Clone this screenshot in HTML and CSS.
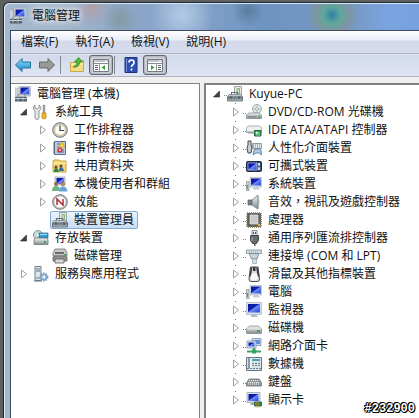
FILE: index.html
```html
<!DOCTYPE html>
<html lang="zh-Hant">
<head>
  <meta charset="UTF-8" />
  <meta name="viewport" content="width=device-width, initial-scale=1.0" />
  <title>電腦管理</title>
  <link rel="stylesheet" href="styles.css">
</head>
<body>
  <!-- Icon sprites, all on a 16x16 grid -->
  <svg class="sprites" aria-hidden="true">
    <defs>
      <linearGradient id="screen" x1="0" y1="0" x2="1" y2="1">
        <stop offset="0" stop-color="#0a1490" /><stop offset=".45" stop-color="#0f22b8" /><stop offset=".5" stop-color="#6f8cf4" /><stop offset="1" stop-color="#2443d8" />
      </linearGradient>
      <linearGradient id="metal" x1="0" y1="0" x2="0" y2="1">
        <stop offset="0" stop-color="#f4f6f6" /><stop offset="1" stop-color="#848b90" />
      </linearGradient>
      <linearGradient id="blue" x1="0" y1="0" x2="0" y2="1">
        <stop offset="0" stop-color="#8fe0fb" /><stop offset="1" stop-color="#1586d0" />
      </linearGradient>
    </defs>
    <symbol id="closed" viewBox="0 0 8 10"><path d="M1.500 1v8l5-4z" fill="#fff" stroke="#a0a0a0" /></symbol>
    <symbol id="open" viewBox="0 0 8 10"><path d="M6.500 2v6h-6z" fill="#404040" stroke="#222" stroke-width=".6" /></symbol>
    <symbol id="manage" viewBox="0 0 16 16">
      <path d="M4 0h12v10H4z" fill="#d8dce4" stroke="#8b93a2" stroke-width=".6" />
      <path d="M5.500 1.500h9v7h-9z" fill="url(#screen)" />
      <path d="M0 2h3v9H0z" fill="#d5d9de" stroke="#99a" stroke-width=".5" />
      <path d="M3 9l2-1h4l1 2v1H2z" fill="#ccd2d8" stroke="#667" stroke-width=".6" />
      <path d="M0 11h12v4.500H0z" fill="#56636f" />
      <path d="M0 12.500h12M3 11.500v3M8 11.500v3" stroke="#c5ced6" />
    </symbol>
    <symbol id="tools" viewBox="0 0 16 16">
      <path d="M2 1v3l2 1 2-1V1c3 2 2 5 0 6v7c-1 2-3 2-4 0V7C0 6 0 2 2 1z" fill="#e5e8e8" stroke="#777e80" stroke-width=".8" />
      <path d="M10 1h2v8h-2z" fill="#aaa" stroke="#777" stroke-width=".4" />
      <path d="M9 9h4v5q-2 2-4 0z" fill="#f5b92c" stroke="#b77b10" stroke-width=".7" />
    </symbol>
    <symbol id="clock" viewBox="0 0 16 16">
      <circle cx="8" cy="8" r="7.300" fill="#c5c8cb" stroke="#73777a" stroke-width="1" />
      <circle cx="8" cy="8" r="5.300" fill="#fffdf0" stroke="#d8c890" />
      <path d="M8 3.500V8.500h4" fill="none" stroke="#333f66" stroke-width="1.200" />
    </symbol>
    <symbol id="event" viewBox="0 0 16 16">
      <path d="M2.500 1.500h11v13h-11z" fill="#bccbe2" stroke="#596d91" />
      <path d="M1 3h2M1 5h2M1 7h2M1 9h2M1 11h2M1 13h2" stroke="#666" />
      <path d="M5 4h3M5 7h2M5 10h7M5 12h7" stroke="#4e6da7" />
      <path d="M10 2l3 5H7z" fill="#ffd430" stroke="#c78d00" stroke-width=".5" />
      <circle cx="8" cy="10" r="2.500" fill="#d8342c" />
      <path d="M7 9l2 2M9 9l-2 2" stroke="#fff" stroke-width=".7" />
    </symbol>
    <symbol id="share" viewBox="0 0 16 16">
      <path d="M1 3l1-1h5l1 1h6v11H1z" fill="#f3d773" stroke="#c9a13a" />
      <path d="M1 5h13" stroke="#fff1b3" />
      <circle cx="4" cy="9" r="1.500" fill="#704628" /><circle cx="9" cy="8" r="1.500" fill="#704628" />
      <path d="M2 14q0-4 2-4t3 4z" fill="#2c8052" /><path d="M7 13q0-4 2-4t3 4z" fill="#356ca7" />
    </symbol>
    <symbol id="users" viewBox="0 0 16 16">
      <path d="M3 1h10v8H3z" fill="#d9dee9" stroke="#7e899d" stroke-width=".6" />
      <path d="M4.500 2h7.500v6H4.500z" fill="url(#screen)" />
      <circle cx="4" cy="8" r="2" fill="#a06a42" /><path d="M0 15q0-5 4-5t4 5z" fill="#6fb583" />
      <circle cx="11" cy="8" r="2.200" fill="#bd8355" /><path d="M7 15.500q0-5 4-5t4.500 5z" fill="#6aa3dc" />
    </symbol>
    <symbol id="perf" viewBox="0 0 16 16">
      <circle cx="8" cy="8" r="7.300" fill="#bfc1c3" stroke="#777" />
      <circle cx="8" cy="8" r="5.500" fill="#fff" />
      <path d="M5 11V5l6 6V5" fill="none" stroke="#b02028" stroke-width="1.400" />
    </symbol>
    <symbol id="device" viewBox="0 0 16 16">
      <path d="M7.500 .5h7v9h-7z" fill="#e6eae4" stroke="#8a908b" stroke-width=".8" />
      <path d="M10 2.500h2.500v5H10z" fill="#c5dfc3" stroke="#75a177" stroke-width=".8" />
      <path d="M4.500 9V6.500h6V9" fill="none" stroke="#676f75" stroke-width="1.200" />
      <path d="M2 8.500h12l1.500 2.500H.5z" fill="#c4cbd0" stroke="#737c82" stroke-width=".7" />
      <path d="M.5 11h15v4H.5z" fill="#7f8b93" stroke="#59646b" stroke-width=".8" />
      <path d="M4 10v3M12 10v3" stroke="#475057" /><path d="M1 14h14" stroke="#abb5bb" />
    </symbol>
    <symbol id="storage" viewBox="0 0 16 16">
      <circle cx="5" cy="5" r="4.500" fill="#c9dbd6" stroke="#7c9b99" /><circle cx="5" cy="5" r="1.300" fill="#fff" />
      <path d="M6 3h9v5H6z" fill="#2f9bd0" stroke="#336f91" stroke-width=".7" /><path d="M7 4h7v1H7z" fill="#a7e3f5" />
      <path d="M1 10l1-2h12l1 2v4.500H1z" fill="url(#metal)" stroke="#6e777a" stroke-width=".8" />
      <path d="M11 11h2v2h-2z" fill="#46a952" />
    </symbol>
    <symbol id="diskmgr" viewBox="0 0 16 16">
      <path d="M1 5l2-4h10l2 4v3H1z" fill="#c7c9c6" stroke="#70736f" stroke-width=".8" /><path d="M3 5h9" stroke="#4d504c" stroke-width="1.500" />
      <path d="M1 9l2-1h10l2 1v4H1z" fill="#91948f" stroke="#60635e" stroke-width=".8" />
      <path d="M3 11h9v4H3z" fill="#dadbd7" stroke="#555" stroke-width=".8" /><path d="M12 6h2v2h-2z" fill="#4ca65d" />
    </symbol>
    <symbol id="services" viewBox="0 0 16 16">
      <path d="M2 .5h6v14H2z" fill="#dfe7eb" stroke="#6d7f8c" /><path d="M3 3h4M3 5h4M3 12h4" stroke="#66798a" />
      <path d="M1 15h8" stroke="#66798a" />
      <circle cx="11" cy="11" r="3.500" fill="#9bb9d4" stroke="#7299bd" stroke-width="1.800" stroke-dasharray="1.500 1" /><circle cx="11" cy="11" r="1.300" fill="#fff" />
    </symbol>
    <symbol id="dvd" viewBox="0 0 16 16">
      <circle cx="11" cy="5" r="4.500" fill="#e4e9e9" stroke="#8d9999" stroke-width=".8" /><path d="M11 1v8M7 5h8" stroke="#a9c6b5" /><circle cx="11" cy="5" r="1.400" fill="#fff" stroke="#777" stroke-width=".5" />
      <path d="M.5 11l2.500-2h10l2.500 2v3.500H.5z" fill="url(#metal)" stroke="#858d90" stroke-width=".8" /><path d="M2 12.500h8" stroke="#888" /><path d="M12 11.500h2v2h-2z" fill="#4db955" />
    </symbol>
    <symbol id="ide" viewBox="0 0 16 16">
      <path d="M.5 6.500q0-2.500 3-2.500h9q3 0 3 2.500v4H.5z" fill="#eef0f0" stroke="#969fa1" stroke-width=".8" /><path d="M1 9.500h14v2H2z" fill="#9aa1a4" />
      <path d="M8.500 8.500h6.500v5.500H8.500z" fill="#3e9a54" stroke="#22673a" /><path d="M10 10h1.500v1.500H10zM13 10v2M10 13h4" fill="#cfe" stroke="#cfe" stroke-width=".6" />
    </symbol>
    <symbol id="hid" viewBox="0 0 16 16">
      <path d="M2 5V1h3v4l1 3-1 5H2L1 8z" fill="#c9d0d5" stroke="#3f4a53" stroke-width="1" />
      <path d="M6.500 3.500h9v5h-9z" fill="#e2e7e9" stroke="#7b878d" stroke-width=".8" /><path d="M7 5h8M7 7h8" stroke="#77848d" stroke-dasharray="1 1" />
      <path d="M7 15l1-5q1-2 2-1h2q2-1 3 1l.5 5-2.500-2h-3z" fill="#aecbe3" stroke="#4d7499" stroke-width=".8" />
    </symbol>
    <symbol id="portable" viewBox="0 0 16 16">
      <rect x=".5" y="3.500" width="15" height="10" rx="1" fill="#33496d" stroke="#1e2d4c" />
      <path d="M2 5h9v7H2z" fill="url(#screen)" /><path d="M2 5h9v7H2z" fill="none" stroke="#c2cde0" stroke-width=".6" /><path d="M12 5h2v7h-2z" fill="#d6dfe9" /><circle cx="13" cy="8.500" r="1" fill="#345" />
    </symbol>
    <symbol id="computer" viewBox="0 0 16 16">
      <path d="M.5 5.500h2.500v9H.5z" fill="#cdd8d5" stroke="#7b8b88" stroke-width=".7" /><path d="M1 9h1v4H1z" fill="#56a26a" />
      <path d="M4 1.500h12v9.500H4z" fill="#dbe0ea" stroke="#a4adbc" stroke-width=".6" /><path d="M5 2.500h10v7H5z" fill="url(#screen)" />
      <path d="M8.500 11h3.500l2 2.500H6.500z" fill="#c3cad2" />
    </symbol>
    <symbol id="sound" viewBox="0 0 16 16">
      <path d="M2 6h4v5H2z" fill="#777f86" stroke="#555e65" stroke-width=".7" /><path d="M6 6l6-5v14l-6-4z" fill="url(#metal)" stroke="#687279" stroke-width=".8" /><path d="M12 2q2 6 0 12" fill="none" stroke="#a4adb2" />
    </symbol>
    <symbol id="cpu" viewBox="0 0 16 16">
      <path d="M1 1h14v14H1z" fill="#686458" stroke="#9c9474" stroke-width="2" stroke-dasharray="1 1" /><path d="M1.500 1.500h13v13h-13z" fill="#5c5b57" />
      <path d="M4 3h8v9H4z" fill="#c8c9ca" stroke="#e7e8e8" stroke-width=".7" /><path d="M12 12h2v2h-2z" fill="#e5bd39" />
    </symbol>
    <symbol id="usb" viewBox="0 0 16 16">
      <path d="M6 .5h5v5H6z" fill="#dde0e1" stroke="#777e82" stroke-width=".8" /><path d="M7 2h1v2H7zM9 2h1v2H9z" fill="#555" />
      <path d="M4.500 5.500h8v5l-2 3h-4l-2-3z" fill="#656b71" stroke="#42474c" /><path d="M6 7v4" stroke="#abb2b6" /><path d="M8 13h1.500v3H8z" fill="#555" />
    </symbol>
    <symbol id="port" viewBox="0 0 16 16">
      <path d="M.5 2h15v3.500H.5z" fill="#d8e0e4" stroke="#7e8c95" stroke-width=".8" /><path d="M3 4h10" stroke="#8b9aa4" stroke-dasharray="1 1" />
      <path d="M3 5.500h10l-2 5.500H5.500z" fill="#c4d2da" stroke="#748793" stroke-width=".8" /><path d="M6.500 11h4v4.500h-4z" fill="#d6dfe4" stroke="#8797a0" stroke-width=".6" />
    </symbol>
    <symbol id="mouse" viewBox="0 0 16 16">
      <path d="M4.500 1h7.500l1.500 12q0 2.500-2 2.500H5q-2 0-2-2.500z" fill="#d9dadb" stroke="#4b4d50" stroke-width="1" />
      <path d="M5.500 1.500q-.5 6-2 9M11 1.500q.5 6 2 9" fill="none" stroke="#37393c" stroke-width="1.600" />
      <path d="M7 1h2.500v4H7z" fill="#33363a" /><path d="M6 8q2.500-3 4.500 0l1.500 5q-4 3-7.500 0z" fill="#f7f7f7" />
    </symbol>
    <symbol id="monitor" viewBox="0 0 16 16">
      <path d="M.5 .5h15v12H.5z" fill="#dce2ed" stroke="#a4adbc" stroke-width=".7" /><path d="M2 2h12v8.500H2z" fill="url(#screen)" /><path d="M6 12.500h4l2 2.500H4.500z" fill="#b3bbc5" />
    </symbol>
    <symbol id="disk" viewBox="0 0 16 16">
      <path d="M.5 9l3-3h9l3 3v4.500H.5z" fill="url(#metal)" stroke="#858d8e" stroke-width=".8" /><path d="M1 9h14" stroke="#e7ebeb" /><path d="M11 10h3v2h-3z" fill="#4ca354" />
    </symbol>
    <symbol id="network" viewBox="0 0 16 16">
      <path d="M6 .5h9v7H6z" fill="#c8d8ed" stroke="#7991ac" stroke-width=".8" /><path d="M8 2h6v4H8z" fill="#5b8de5" />
      <path d="M1 3h9v7H1z" fill="#dce4f0" stroke="#8292a8" stroke-width=".8" /><path d="M2.500 4.500h6v4h-6z" fill="url(#screen)" />
      <path d="M8 10v3M1 13.500h14" stroke="#36a364" stroke-width="2" /><path d="M6 11.500h4v4H6z" fill="#36a364" />
    </symbol>
    <symbol id="modem" viewBox="0 0 16 16">
      <path d="M.5 1.500h15v13H.5z" fill="#dbe4e8" stroke="#647783" /><path d="M6 3h8v2H6z" fill="#4c9fb8" /><path d="M3 2v10" stroke="#879ba8" stroke-width="2" /><path d="M5 2v10" stroke="#fff" />
      <path d="M6 7.500h8M6 9.500h8M1 12.500h14" stroke="#667c8a" stroke-dasharray="2 1" />
    </symbol>
    <symbol id="keyboard" viewBox="0 0 16 16">
      <path d="M3 5h10l2.500 4v3H.5V9z" fill="#949a9e" stroke="#697074" stroke-width=".8" /><path d="M3 6.500h10M2 8.500h12M2 10h12" stroke="#edf0f0" stroke-dasharray="1 1" />
    </symbol>
    <symbol id="display" viewBox="0 0 16 16">
      <path d="M1 .5h13v10H1z" fill="#dce2ed" stroke="#98a2b5" stroke-width=".8" /><path d="M2.500 2h10v7h-10z" fill="url(#screen)" /><path d="M5 11h4v2H4z" fill="#a3adb9" />
      <path d="M8.500 10h7v4h-7z" fill="#3b8a4c" stroke="#245b31" stroke-width=".8" /><path d="M10 11h2v2h-2zM9 15h5" fill="#222" stroke="#d6ae45" stroke-width=".7" />
    </symbol>
    <symbol id="arrow-back" viewBox="0 0 16 16"><path d="M.5 8L7 1.500V5h8.500v6H7v3.500z" fill="url(#blue)" stroke="#267199" /></symbol>
    <symbol id="arrow-next" viewBox="0 0 16 16"><path d="M15.500 8L9 1.500V5H.5v6H9v3.500z" fill="#989898" stroke="#686868" /></symbol>
    <symbol id="folder-up" viewBox="0 0 16 16">
      <path d="M1.500 5.500h5l1-2h7v11h-13z" fill="#f5dc83" stroke="#c9a74c" /><path d="M2 7h12" stroke="#fff2bd" />
      <path d="M4 10q4-1 4-5H5.500l4-4.500 4 4.500H11q-1 6-7 5z" fill="#52b83c" stroke="#2c8129" stroke-width=".7" />
    </symbol>
    <symbol id="pane-left" viewBox="0 0 16 16">
      <path d="M.5 2.500h15v12H.5z" fill="#fff" stroke="#73777e" /><path d="M1 4h14M1 6.500h14" stroke="#868b92" /><path d="M12 4h2" stroke="#fff" />
      <path d="M2 8.500h3M2 10.500h3M2 12.500h3" stroke="#5b6670" /><path d="M6.500 7v7" stroke="#999" /><path d="M12 8v5l-3.500-2.500z" fill="#35a43d" />
    </symbol>
    <symbol id="pane-right" viewBox="0 0 16 16">
      <path d="M.5 2.500h15v12H.5z" fill="#fff" stroke="#73777e" /><path d="M1 4h14M1 6.500h14" stroke="#868b92" /><path d="M12 4h2" stroke="#fff" />
      <path d="M11 8.500h3M11 10.500h3M11 12.500h3" stroke="#5b6670" /><path d="M9.500 7v7" stroke="#999" /><path d="M4 8v5l3.500-2.500z" fill="#35a43d" />
    </symbol>
    <symbol id="help" viewBox="0 0 16 16">
      <path d="M2 .5h12v15H2z" fill="#2c4fb0" stroke="#1d327c" /><path d="M3.500 1v14" stroke="#718fda" />
      <path d="M6 5.500q0-2.500 2.500-2.500T11 5.500Q11 7 9.500 8q-1 .7-1 2M8.500 11.500v2" fill="none" stroke="#fff" stroke-width="1.700" />
    </symbol>
  </svg>

  <div class="window">
    <header class="titlebar">
      <svg class="icon"><use href="#manage" /></svg>
      <h1>電腦管理</h1>
    </header>

    <div class="client">
      <nav class="menubar">
        <button type="button">檔案(F)</button>
        <button type="button">執行(A)</button>
        <button type="button">檢視(V)</button>
        <button type="button">說明(H)</button>
      </nav>

      <div class="toolbar">
        <button type="button" aria-label="上一頁"><svg class="icon"><use href="#arrow-back" /></svg></button>
        <button type="button" aria-label="下一頁"><svg class="icon"><use href="#arrow-next" /></svg></button>
        <span class="separator"></span>
        <button type="button" aria-label="上一層"><svg class="icon"><use href="#folder-up" /></svg></button>
        <button type="button" class="pressed" aria-label="主控台樹狀目錄" aria-pressed="true"><svg class="icon"><use href="#pane-left" /></svg></button>
        <span class="separator"></span>
        <button type="button" aria-label="說明"><svg class="icon"><use href="#help" /></svg></button>
        <button type="button" class="pressed" aria-label="動作窗格" aria-pressed="true"><svg class="icon"><use href="#pane-right" /></svg></button>
      </div>

      <main class="panes">
        <!-- Console tree -->
        <section class="pane pane-console">
          <ul class="tree">
            <li>
              <div class="row"><span class="label"><svg class="icon"><use href="#manage" /></svg>電腦管理 (本機)</span></div>
              <ul>
                <li>
                  <div class="row"><button type="button" class="toggle" aria-label="摺疊"><svg><use href="#open" /></svg></button><span class="label"><svg class="icon"><use href="#tools" /></svg>系統工具</span></div>
                  <ul>
                    <li class="row"><button type="button" class="toggle" aria-label="展開"><svg><use href="#closed" /></svg></button><span class="label"><svg class="icon"><use href="#clock" /></svg>工作排程器</span></li>
                    <li class="row"><button type="button" class="toggle" aria-label="展開"><svg><use href="#closed" /></svg></button><span class="label"><svg class="icon"><use href="#event" /></svg>事件檢視器</span></li>
                    <li class="row"><button type="button" class="toggle" aria-label="展開"><svg><use href="#closed" /></svg></button><span class="label"><svg class="icon"><use href="#share" /></svg>共用資料夾</span></li>
                    <li class="row"><button type="button" class="toggle" aria-label="展開"><svg><use href="#closed" /></svg></button><span class="label"><svg class="icon"><use href="#users" /></svg>本機使用者和群組</span></li>
                    <li class="row"><button type="button" class="toggle" aria-label="展開"><svg><use href="#closed" /></svg></button><span class="label"><svg class="icon"><use href="#perf" /></svg>效能</span></li>
                    <li class="row"><span class="toggle"></span><span class="label selected"><svg class="icon"><use href="#device" /></svg>裝置管理員</span></li>
                  </ul>
                </li>
                <li>
                  <div class="row"><button type="button" class="toggle" aria-label="摺疊"><svg><use href="#open" /></svg></button><span class="label"><svg class="icon"><use href="#storage" /></svg>存放裝置</span></div>
                  <ul>
                    <li class="row"><span class="toggle"></span><span class="label"><svg class="icon"><use href="#diskmgr" /></svg>磁碟管理</span></li>
                  </ul>
                </li>
                <li class="row"><button type="button" class="toggle" aria-label="展開"><svg><use href="#closed" /></svg></button><span class="label"><svg class="icon"><use href="#services" /></svg>服務與應用程式</span></li>
              </ul>
            </li>
          </ul>
        </section>

        <!-- Device list -->
        <section class="pane pane-devices">
          <ul class="tree lined">
            <li>
              <div class="row"><button type="button" class="toggle" aria-label="摺疊"><svg><use href="#open" /></svg></button><span class="label"><svg class="icon"><use href="#device" /></svg>Kuyue-PC</span></div>
              <ul>
                <li class="row"><button type="button" class="toggle" aria-label="展開"><svg><use href="#closed" /></svg></button><span class="label"><svg class="icon"><use href="#dvd" /></svg>DVD/CD-ROM 光碟機</span></li>
                <li class="row"><button type="button" class="toggle" aria-label="展開"><svg><use href="#closed" /></svg></button><span class="label"><svg class="icon"><use href="#ide" /></svg>IDE ATA/ATAPI 控制器</span></li>
                <li class="row"><button type="button" class="toggle" aria-label="展開"><svg><use href="#closed" /></svg></button><span class="label"><svg class="icon"><use href="#hid" /></svg>人性化介面裝置</span></li>
                <li class="row"><button type="button" class="toggle" aria-label="展開"><svg><use href="#closed" /></svg></button><span class="label"><svg class="icon"><use href="#portable" /></svg>可攜式裝置</span></li>
                <li class="row"><button type="button" class="toggle" aria-label="展開"><svg><use href="#closed" /></svg></button><span class="label"><svg class="icon"><use href="#computer" /></svg>系統裝置</span></li>
                <li class="row"><button type="button" class="toggle" aria-label="展開"><svg><use href="#closed" /></svg></button><span class="label"><svg class="icon"><use href="#sound" /></svg>音效，視訊及遊戲控制器</span></li>
                <li class="row"><button type="button" class="toggle" aria-label="展開"><svg><use href="#closed" /></svg></button><span class="label"><svg class="icon"><use href="#cpu" /></svg>處理器</span></li>
                <li class="row"><button type="button" class="toggle" aria-label="展開"><svg><use href="#closed" /></svg></button><span class="label"><svg class="icon"><use href="#usb" /></svg>通用序列匯流排控制器</span></li>
                <li class="row"><button type="button" class="toggle" aria-label="展開"><svg><use href="#closed" /></svg></button><span class="label"><svg class="icon"><use href="#port" /></svg>連接埠 (COM 和 LPT)</span></li>
                <li class="row"><button type="button" class="toggle" aria-label="展開"><svg><use href="#closed" /></svg></button><span class="label"><svg class="icon"><use href="#mouse" /></svg>滑鼠及其他指標裝置</span></li>
                <li class="row"><button type="button" class="toggle" aria-label="展開"><svg><use href="#closed" /></svg></button><span class="label"><svg class="icon"><use href="#computer" /></svg>電腦</span></li>
                <li class="row"><button type="button" class="toggle" aria-label="展開"><svg><use href="#closed" /></svg></button><span class="label"><svg class="icon"><use href="#monitor" /></svg>監視器</span></li>
                <li class="row"><button type="button" class="toggle" aria-label="展開"><svg><use href="#closed" /></svg></button><span class="label"><svg class="icon"><use href="#disk" /></svg>磁碟機</span></li>
                <li class="row"><button type="button" class="toggle" aria-label="展開"><svg><use href="#closed" /></svg></button><span class="label"><svg class="icon"><use href="#network" /></svg>網路介面卡</span></li>
                <li class="row"><button type="button" class="toggle" aria-label="展開"><svg><use href="#closed" /></svg></button><span class="label"><svg class="icon"><use href="#modem" /></svg>數據機</span></li>
                <li class="row"><button type="button" class="toggle" aria-label="展開"><svg><use href="#closed" /></svg></button><span class="label"><svg class="icon"><use href="#keyboard" /></svg>鍵盤</span></li>
                <li class="row"><button type="button" class="toggle" aria-label="展開"><svg><use href="#closed" /></svg></button><span class="label"><svg class="icon"><use href="#display" /></svg>顯示卡</span></li>
              </ul>
            </li>
          </ul>
        </section>
      </main>
    </div>
  </div>

  <span class="watermark">#232900</span>
</body>
</html>
```
FILE: styles.css
```css
/* Global Styles */
* {
  box-sizing: border-box;
}
body {
  margin: 0;
  min-height: 100vh;
  display: flex;
  padding: 2px 0 0 3px;
  background: #5f6060;
  font-family: "Open Sans", "Noto Sans CJK TC", sans-serif;
  font-size: 12px;
  line-height: 18px;
  color: #111;
}
ul {
  list-style: none;
  margin: 0;
  padding: 0;
}
button {
  margin: 0;
  padding: 0;
  border: 1px solid transparent;
  background: none;
  font: inherit;
  color: inherit;
}
.sprites {
  position: absolute;
  width: 0;
  height: 0;
}
.icon {
  width: 16px;
  height: 16px;
  flex: none;
}

/* Window frame, glass with the desktop showing through */
.window {
  flex: 1;
  min-width: 0;
  display: flex;
  flex-direction: column;
  padding-left: 6px;
  border: solid #1c2a38;
  border-width: 1px 0 0 1px;
  border-radius: 6px 0 0 0;
  box-shadow: inset 1px 1px 0 #dbe8f3;
  background:
    radial-gradient(circle at 116px 16px, #8299a2 0, transparent 18px),
    radial-gradient(circle at 88px 4px, #b2a0a8 0, transparent 18px),
    radial-gradient(circle at 178px 12px, #b4cbe4 0, transparent 32px),
    radial-gradient(circle at 244px 8px, #5c7ca0 0, transparent 16px),
    radial-gradient(circle at 328px 12px, #2f83a4 0, #5fa79c 9px, #7d95a0 16px, transparent 26px),
    linear-gradient(90deg, #a3b9cd 0, #a3b5cb 60px, #8ba6c8 130px, #83a2c9 190px, #6e94c2 260px, #7899c4 350px, #7aa4e0 385px, #78a2df 100%);
}
.titlebar {
  height: 27px;
  display: flex;
  align-items: center;
  gap: 6px;
  padding-bottom: 2px;
}
.titlebar h1 {
  margin: 0;
  font-size: 12px;
  font-weight: 400;
  text-shadow: 0 0 6px #fff, 0 0 8px #fff;
}
.client {
  flex: 1;
  display: flex;
  flex-direction: column;
  border: solid #3c4a5c;
  border-width: 1px 0 0 1px;
  background: #f0f0f0;
}

/* Menu and toolbar */
.menubar {
  height: 23px;
  display: flex;
  align-items: center;
  gap: 1px;
  padding-left: 2px;
  border-bottom: 1px solid #aab0be;
  background: linear-gradient(#fff 0, #e9edf6 9px, #d3daeb 10px, #d5dbed 100%);
}
.menubar button {
  padding: 0 7px;
}
.toolbar {
  height: 23px;
  display: flex;
  align-items: center;
  padding-left: 0;
  border-bottom: 1px solid #aeb3bd;
  background: linear-gradient(#f4f6fb 0, #d2d9ea 1px, #dfe5f4 100%);
}
.toolbar button {
  width: 24px;
  height: 20px;
  display: flex;
  align-items: center;
  justify-content: center;
}
.toolbar .pressed {
  border-color: #62666e;
  border-radius: 3px;
  background: #cdd1db;
  box-shadow: inset 0 0 2px #777;
}
.separator {
  width: 1px;
  height: 18px;
  margin: 0 4px 0 1px;
  background: #82868f;
}

/* Panes */
.panes {
  flex: 1;
  display: flex;
  gap: 4px;
  padding-top: 6px;
}
.pane {
  background: #fff;
  border: 1px solid #7e8186;
}
.pane-console {
  flex: 0 0 189px;
  padding-top: 1px;
  border-left: 0;
  border-bottom: 0;
}
.pane-devices {
  flex: 1;
  min-width: 0;
  border-width: 2px 0 0 2px;
}

/* Trees */
.tree {
  padding-left: 1px;
}
.tree ul {
  margin-left: 5px;
}
.tree ul ul,
.lined ul {
  margin-left: 0;
  padding-left: 19px;
}
.row {
  height: 18px;
  display: flex;
  align-items: center;
  white-space: nowrap;
}
.toggle {
  width: 14px;
  height: 14px;
  flex: none;
  display: flex;
  align-items: center;
  justify-content: center;
  border: 0;
}
.toggle svg {
  width: 8px;
  height: 10px;
}
.label {
  height: 18px;
  display: flex;
  align-items: center;
  gap: 6px;
  padding: 0 3px 0 2px;
  border: 1px solid transparent;
  border-radius: 2px;
}
.tree ul .label {
  padding-left: 1px;
}
.selected {
  border-color: #88a9cf;
  background: linear-gradient(#edf4fc, #c6dcf5);
}

/* Dotted guide lines */
.lined {
  padding-left: 4px;
}
.lined ul {
  background: repeating-linear-gradient(#777 0 1px, #fff 1px 3px) 25px 0 / 1px 100% no-repeat;
}
.lined .toggle {
  background: #fff;
}
.lined .label,
.lined ul .label {
  padding-left: 3px;
  border-left: 0;
  background: repeating-linear-gradient(90deg, #888 0 1px, #fff 1px 2px) 0 9px / 3px 1px no-repeat;
}

.watermark {
  position: absolute;
  right: 4px;
  bottom: 2px;
  font: bold 12px/14px "Liberation Mono", monospace;
  color: #fff;
  text-shadow: 1px 0 #000, -1px 0 #000, 0 1px #000, 0 -1px #000, 1px 1px #000, -1px -1px #000;
}
```
